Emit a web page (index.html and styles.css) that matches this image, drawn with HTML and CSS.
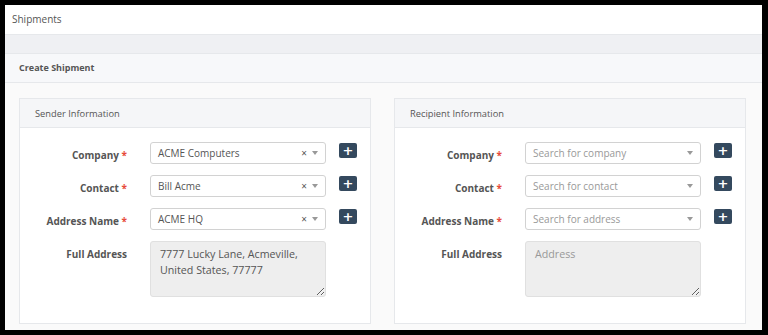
FILE: index.html
```html
<!DOCTYPE html>
<html lang="en">
<head>
    <meta charset="UTF-8">
    <meta name="viewport" content="width=device-width, initial-scale=1.0">
    <title>Shipments</title>
    <link rel="stylesheet" href="styles.css">
</head>
<body>
<div class="window">
    <div class="topbar">Shipments</div>
    <div class="subbar"></div>
    <div class="card-head">Create Shipment</div>
    <div class="card-body">
        <div class="panel">
            <div class="panel-head">Sender Information</div>
            <div class="panel-body">
                <div class="form-row">
                    <label class="form-label">Company <span class="req">*</span></label>
                    <div class="select">
                        <span class="select-value">ACME Computers</span>
                        <span class="select-clear">×</span>
                        <span class="select-arrow"></span>
                    </div>
                    <button class="add-btn">+</button>
                </div>
                <div class="form-row">
                    <label class="form-label">Contact <span class="req">*</span></label>
                    <div class="select">
                        <span class="select-value">Bill Acme</span>
                        <span class="select-clear">×</span>
                        <span class="select-arrow"></span>
                    </div>
                    <button class="add-btn">+</button>
                </div>
                <div class="form-row">
                    <label class="form-label">Address Name <span class="req">*</span></label>
                    <div class="select">
                        <span class="select-value">ACME HQ</span>
                        <span class="select-clear">×</span>
                        <span class="select-arrow"></span>
                    </div>
                    <button class="add-btn">+</button>
                </div>
                <div class="form-row">
                    <label class="form-label">Full Address</label>
                    <textarea class="address" readonly>7777 Lucky Lane, Acmeville, United States, 77777</textarea>
                </div>
            </div>
        </div>
        <div class="panel">
            <div class="panel-head">Recipient Information</div>
            <div class="panel-body">
                <div class="form-row">
                    <label class="form-label">Company <span class="req">*</span></label>
                    <div class="select">
                        <span class="select-value placeholder">Search for company</span>
                        <span class="select-arrow"></span>
                    </div>
                    <button class="add-btn">+</button>
                </div>
                <div class="form-row">
                    <label class="form-label">Contact <span class="req">*</span></label>
                    <div class="select">
                        <span class="select-value placeholder">Search for contact</span>
                        <span class="select-arrow"></span>
                    </div>
                    <button class="add-btn">+</button>
                </div>
                <div class="form-row">
                    <label class="form-label">Address Name <span class="req">*</span></label>
                    <div class="select">
                        <span class="select-value placeholder">Search for address</span>
                        <span class="select-arrow"></span>
                    </div>
                    <button class="add-btn">+</button>
                </div>
                <div class="form-row">
                    <label class="form-label">Full Address</label>
                    <textarea class="address" readonly placeholder="Address"></textarea>
                </div>
            </div>
        </div>
    </div>
</div>
</body>
</html>
```

FILE: styles.css
```css
body {
    margin: 0;
    background: #000;
    font-family: 'Open Sans', sans-serif;
    color: #555;
    height: 335px;
    overflow: hidden;
}
.window {
    margin: 5px 6px 0 5px;
    height: 325px;
    background: #fafafa;
    overflow: hidden;
}
.topbar {
    height: 29px;
    line-height: 28px;
    padding-left: 7px;
    font-size: 10px;
    background: #fff;
    border-bottom: 1px solid #e6e8eb;
}
.subbar {
    height: 18px;
    background: #eff0f3;
    border-bottom: 1px solid #e6e8eb;
}
.card-head {
    height: 28px;
    line-height: 28px;
    padding-left: 14px;
    font-size: 9px;
    font-weight: bold;
    background: #f7f8fa;
    border-bottom: 1px solid #e6e8eb;
}
.card-body {
    display: grid;
    grid-template-columns: 352px 352px;
    gap: 23px;
    padding: 15px 16px 0 14px;
}
.panel {
    background: #fff;
    border: 1px solid #e6e8eb;
    height: 226px;
    box-sizing: border-box;
}
.panel-head {
    height: 28px;
    line-height: 29px;
    padding-left: 15px;
    font-size: 9.3px;
    background: #f5f6f8;
    border-bottom: 1px solid #e6e8eb;
}
.panel-body {
    padding-top: 14px;
}
.form-row {
    display: flex;
    align-items: flex-start;
    margin-bottom: 11px;
}
.form-label {
    width: 107px;
    padding-right: 23px;
    padding-top: 6px;
    text-align: right;
    font-size: 10px;
    font-weight: bold;
}
.req {
    color: #e74c3c;
}
.select {
    width: 176px;
    height: 22px;
    box-sizing: border-box;
    border: 1px solid #d2d2d2;
    border-radius: 3px;
    background: #fff;
    display: flex;
    align-items: center;
    padding: 0 7px 0 7px;
    font-size: 10px;
}
.select-value {
    flex: 1;
}
.placeholder {
    color: #999;
}
.select-clear {
    font-size: 10px;
    color: #555;
    margin-right: 5px;
}
.select-arrow {
    width: 0;
    height: 0;
    border-left: 3px solid transparent;
    border-right: 3px solid transparent;
    border-top: 4px solid #999;
}
.add-btn {
    margin: 1px 0 0 13px;
    width: 18px;
    height: 15px;
    padding: 0;
    border: none;
    border-radius: 2px;
    background: #34495e;
    color: #fff;
    font-family: 'DejaVu Sans', sans-serif;
    font-size: 13px;
    font-weight: bold;
    line-height: 15px;
}
.address {
    width: 176px;
    height: 56px;
    box-sizing: border-box;
    border: 1px solid #e0e0e0;
    border-radius: 3px;
    background: #eee;
    padding: 4px 9px;
    font-family: 'Open Sans', sans-serif;
    font-size: 10.7px;
    line-height: 16px;
    color: #555;
    resize: vertical;
}
.address::placeholder {
    color: #999;
}
```
